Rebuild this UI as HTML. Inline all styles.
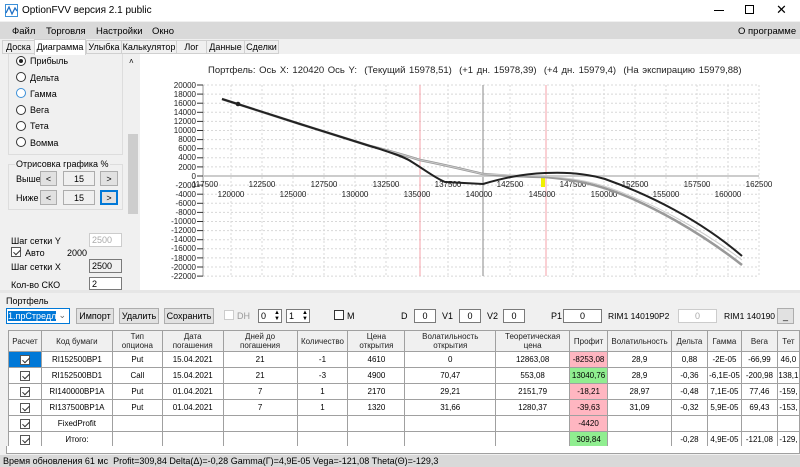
<!DOCTYPE html>
<html><head><meta charset="utf-8">
<style>
*{margin:0;padding:0;box-sizing:border-box}
body{width:800px;height:467px;overflow:hidden;background:#f0f0f0;font-family:"Liberation Sans","DejaVu Sans",sans-serif;font-size:9px;color:#000;position:relative}
.a{position:absolute;white-space:nowrap}
.tab{position:absolute;top:40px;height:14px;border:1px solid #d0d0d0;text-align:center;line-height:12px;font-size:9px}
.btn{position:absolute;background:#e1e1e1;border:1px solid #adadad;text-align:center;font-size:9px;line-height:14px}
.inp{position:absolute;background:#fff;border:1px solid #7a7a7a;font-size:9px;line-height:13px;text-align:center}
.rad{position:absolute;width:10px;height:10px;border:1px solid #333;border-radius:50%;background:#fff}
table{border-collapse:collapse;position:absolute;left:8px;top:330px;background:#fff;font-size:8px;table-layout:fixed}
td{border:1px solid #a0a0a0;text-align:center;height:16px;padding:0;overflow:hidden;white-space:nowrap}
tr.h td{background:#f0f0f0;height:21px;line-height:9px;color:#222}
.cb{display:inline-block;width:10px;height:10px;border:1px solid #555;background:#fff;position:relative;vertical-align:middle}
.cb:after{content:"";position:absolute;left:3px;top:0px;width:3px;height:6px;border:solid #333;border-width:0 1px 1px 0;transform:rotate(45deg)}
.red{background:#ffb6c1}.grn{background:#90ee90}
</style></head><body>
<div class="a" style="left:0;top:0;width:800px;height:21px;background:#fff"></div>
<svg class="a" style="left:5px;top:4px" width="13" height="13"><rect x="0.5" y="0.5" width="12" height="12" fill="#fff" stroke="#3a8fd8"/><polyline points="1,9 4,3 7,10 10,4 12,7" fill="none" stroke="#1f6fc4" stroke-width="1.3"/></svg>
<div class="a" style="left:22px;top:5px;font-size:10px">OptionFVV версия 2.1 public</div>
<div class="a" style="left:714px;top:10px;width:10px;height:1px;background:#000"></div>
<div class="a" style="left:745px;top:5px;width:9px;height:9px;border:1px solid #000"></div>
<div class="a" style="left:776px;top:2px;font-size:13px">✕</div>
<div class="a" style="left:0;top:22px;width:800px;height:17px;background:#d9d9d9"></div>
<div class="a" style="left:12px;top:26px;font-size:9.5px">Файл</div>
<div class="a" style="left:46px;top:26px;font-size:9.5px">Торговля</div>
<div class="a" style="left:96px;top:26px;font-size:9.5px">Настройки</div>
<div class="a" style="left:152px;top:26px;font-size:9.5px">Окно</div>
<div class="a" style="left:738px;top:26px;font-size:9.5px">О программе</div>
<div class="tab" style="left:2px;width:33px">Доска</div>
<div class="tab" style="left:34px;top:39px;height:16px;width:52px;background:#fff;border-bottom:none;line-height:14px">Диаграмма</div>
<div class="tab" style="left:86px;width:36px">Улыбка</div>
<div class="tab" style="left:121px;width:56px">Калькулятор</div>
<div class="tab" style="left:176px;width:31px">Лог</div>
<div class="tab" style="left:206px;width:39px">Данные</div>
<div class="tab" style="left:244px;width:35px">Сделки</div>
<div class="a" style="left:8px;top:54px;width:115px;height:101px;border:1px solid #ddd;border-top:none"></div>
<div class="rad" style="left:16px;top:56px"><div style="position:absolute;left:2px;top:2px;width:4px;height:4px;border-radius:50%;background:#222"></div></div>
<div class="a" style="left:30px;top:56px">Прибыль</div>
<div class="rad" style="left:16px;top:72px"></div><div class="a" style="left:30px;top:73px">Дельта</div>
<div class="rad" style="left:16px;top:88px;border-color:#3a8fd8"></div><div class="a" style="left:30px;top:89px">Гамма</div>
<div class="rad" style="left:16px;top:105px"></div><div class="a" style="left:30px;top:105px">Вега</div>
<div class="rad" style="left:16px;top:121px"></div><div class="a" style="left:30px;top:121px">Тета</div>
<div class="rad" style="left:16px;top:137px"></div><div class="a" style="left:30px;top:138px">Вомма</div>
<div class="a" style="left:8px;top:164px;width:115px;height:46px;border:1px solid #ddd"></div>
<div class="a" style="left:15px;top:159px;background:#f0f0f0;padding:0 1px">Отрисовка графика %</div>
<div class="a" style="left:16px;top:174px">Выше</div>
<div class="btn" style="left:40px;top:171px;width:17px;height:15px">&lt;</div>
<div class="btn" style="left:63px;top:171px;width:32px;height:15px;background:#f0f0f0">15</div>
<div class="btn" style="left:100px;top:171px;width:18px;height:15px">&gt;</div>
<div class="a" style="left:16px;top:193px">Ниже</div>
<div class="btn" style="left:40px;top:190px;width:17px;height:15px">&lt;</div>
<div class="btn" style="left:63px;top:190px;width:32px;height:15px;background:#f0f0f0">15</div>
<div class="btn" style="left:100px;top:190px;width:18px;height:15px;border:1px solid #0078d7;box-shadow:inset 0 0 0 1px #0078d7">&gt;</div>
<div class="a" style="left:11px;top:236px">Шаг сетки Y</div>
<div class="inp" style="left:89px;top:233px;width:33px;height:14px;color:#aaa;border-color:#ccc;text-align:left;padding-left:2px">2500</div>
<div class="cb" style="position:absolute;left:11px;top:247px"></div>
<div class="a" style="left:25px;top:248px">Авто</div>
<div class="a" style="left:67px;top:248px">2000</div>
<div class="a" style="left:11px;top:262px">Шаг сетки X</div>
<div class="inp" style="left:89px;top:259px;width:33px;height:14px;background:#f0f0f0;text-align:left;padding-left:2px">2500</div>
<div class="a" style="left:11px;top:280px">Кол-во СКО</div>
<div class="inp" style="left:89px;top:277px;width:33px;height:13px;text-align:left;padding-left:2px">2</div>
<div class="a" style="left:128px;top:56px;width:10px;height:234px;background:#f0f0f0"></div>
<div class="a" style="left:128px;top:134px;width:10px;height:80px;background:#cdcdcd"></div>
<div class="a" style="left:129px;top:57px;font-size:8px">˄</div>
<div class="a" style="left:140px;top:54px;width:660px;height:236px;background:#fff"></div>
<div class="a" style="left:208px;top:65px;font-size:9.5px;color:#222;word-spacing:1px">Портфель: Ось X: 120420 Ось Y: &nbsp;(Текущий 15978,51) &nbsp;(+1 дн. 15978,39) &nbsp;(+4 дн. 15979,4) &nbsp;(На экспирацию 15979,88)</div>
<svg class="a" style="left:0;top:0" width="800" height="300" font-family="Liberation Sans, sans-serif" font-size="8">
<g stroke="#d8d8d8" stroke-dasharray="2,2" stroke-width="1">
<line x1="203" y1="85" x2="759" y2="85"/><line x1="203" y1="94.1" x2="759" y2="94.1"/><line x1="203" y1="103.2" x2="759" y2="103.2"/><line x1="203" y1="112.3" x2="759" y2="112.3"/><line x1="203" y1="121.4" x2="759" y2="121.4"/><line x1="203" y1="130.5" x2="759" y2="130.5"/><line x1="203" y1="139.6" x2="759" y2="139.6"/><line x1="203" y1="148.7" x2="759" y2="148.7"/><line x1="203" y1="157.8" x2="759" y2="157.8"/><line x1="203" y1="166.9" x2="759" y2="166.9"/><line x1="203" y1="185.1" x2="759" y2="185.1"/><line x1="203" y1="194.2" x2="759" y2="194.2"/><line x1="203" y1="203.3" x2="759" y2="203.3"/><line x1="203" y1="212.4" x2="759" y2="212.4"/><line x1="203" y1="221.5" x2="759" y2="221.5"/><line x1="203" y1="230.6" x2="759" y2="230.6"/><line x1="203" y1="239.7" x2="759" y2="239.7"/><line x1="203" y1="248.8" x2="759" y2="248.8"/><line x1="203" y1="257.9" x2="759" y2="257.9"/><line x1="203" y1="267" x2="759" y2="267"/><line x1="203" y1="276.1" x2="759" y2="276.1"/>
<line x1="231" y1="85" x2="231" y2="276"/><line x1="262" y1="85" x2="262" y2="276"/><line x1="293" y1="85" x2="293" y2="276"/><line x1="324" y1="85" x2="324" y2="276"/><line x1="355" y1="85" x2="355" y2="276"/><line x1="386" y1="85" x2="386" y2="276"/><line x1="448" y1="85" x2="448" y2="276"/><line x1="510" y1="85" x2="510" y2="276"/><line x1="573" y1="85" x2="573" y2="276"/><line x1="604" y1="85" x2="604" y2="276"/><line x1="635" y1="85" x2="635" y2="276"/><line x1="666" y1="85" x2="666" y2="276"/><line x1="697" y1="85" x2="697" y2="276"/><line x1="728" y1="85" x2="728" y2="276"/><line x1="759" y1="85" x2="759" y2="276"/>
</g>
<line x1="203" y1="85" x2="203" y2="276" stroke="#999"/>
<line x1="420" y1="85" x2="420" y2="276" stroke="#f4a0a8"/>
<line x1="546" y1="85" x2="546" y2="276" stroke="#f4a0a8"/>
<line x1="483" y1="85" x2="483" y2="276" stroke="#888"/>
<line x1="203" y1="176" x2="759" y2="176" stroke="#ccc" stroke-width="2"/>
<g stroke="#333">
<line x1="197" y1="85" x2="203" y2="85"/><line x1="197" y1="94.1" x2="203" y2="94.1"/><line x1="197" y1="103.2" x2="203" y2="103.2"/><line x1="197" y1="112.3" x2="203" y2="112.3"/><line x1="197" y1="121.4" x2="203" y2="121.4"/><line x1="197" y1="130.5" x2="203" y2="130.5"/><line x1="197" y1="139.6" x2="203" y2="139.6"/><line x1="197" y1="148.7" x2="203" y2="148.7"/><line x1="197" y1="157.8" x2="203" y2="157.8"/><line x1="197" y1="166.9" x2="203" y2="166.9"/><line x1="197" y1="176" x2="203" y2="176"/><line x1="197" y1="185.1" x2="203" y2="185.1"/><line x1="197" y1="194.2" x2="203" y2="194.2"/><line x1="197" y1="203.3" x2="203" y2="203.3"/><line x1="197" y1="212.4" x2="203" y2="212.4"/><line x1="197" y1="221.5" x2="203" y2="221.5"/><line x1="197" y1="230.6" x2="203" y2="230.6"/><line x1="197" y1="239.7" x2="203" y2="239.7"/><line x1="197" y1="248.8" x2="203" y2="248.8"/><line x1="197" y1="257.9" x2="203" y2="257.9"/><line x1="197" y1="267" x2="203" y2="267"/><line x1="197" y1="276.1" x2="203" y2="276.1"/>
</g>
<g text-anchor="end" fill="#222">
<text x="196" y="88">20000</text><text x="196" y="97">18000</text><text x="196" y="106">16000</text><text x="196" y="115">14000</text><text x="196" y="124">12000</text><text x="196" y="133">10000</text><text x="196" y="142">8000</text><text x="196" y="151">6000</text><text x="196" y="160">4000</text><text x="196" y="170">2000</text><text x="196" y="179">0</text><text x="196" y="188">-2000</text><text x="196" y="197">-4000</text><text x="196" y="206">-6000</text><text x="196" y="215">-8000</text><text x="196" y="224">-10000</text><text x="196" y="233">-12000</text><text x="196" y="242">-14000</text><text x="196" y="251">-16000</text><text x="196" y="261">-18000</text><text x="196" y="270">-20000</text><text x="196" y="279">-22000</text>
</g>
<g text-anchor="middle" fill="#222">
<text x="205" y="187">117500</text><text x="262" y="187">122500</text><text x="324" y="187">127500</text><text x="386" y="187">132500</text><text x="448" y="187">137500</text><text x="510" y="187">142500</text><text x="573" y="187">147500</text><text x="635" y="187">152500</text><text x="697" y="187">157500</text><text x="759" y="187">162500</text>
<text x="231" y="197">120000</text><text x="293" y="197">125000</text><text x="355" y="197">130000</text><text x="417" y="197">135000</text><text x="479" y="197">140000</text><text x="542" y="197">145000</text><text x="604" y="197">150000</text><text x="666" y="197">155000</text><text x="728" y="197">160000</text>
</g>
<rect x="541" y="176" width="4" height="11" fill="#f0f000"/>
<path d="M222,99 L300,124 L370,146 C395,152 410,157 420,160 C450,166 470,171 483,174 C510,176 530,177 545,177 C570,179 590,183 610,190 C650,204 700,232 742,265" fill="none" stroke="#999" stroke-width="2.5"/>
<path d="M222,99 L300,124 L370,146 C395,152 410,157 420,160 C450,166 470,171 483,174 C510,175 530,176 545,176 C570,178 590,181 610,188 C650,202 700,228 742,260" fill="none" stroke="#ccc" stroke-width="1"/>
<path d="M222,99 L300,124 L370,146 C390,152 405,157 412,162 C425,170 435,178 445,182 L483,184 C500,179 520,174 545,173 C565,172 585,173 605,179 C650,195 700,220 742,256" fill="none" stroke="#222" stroke-width="2"/>
<circle cx="238" cy="104" r="2.3" fill="#222"/>
</svg>
<div class="a" style="left:0;top:290px;width:800px;height:3px;background:#e6e6e6"></div>
<div class="a" style="left:6px;top:296px">Портфель</div>
<div class="inp" style="left:6px;top:308px;width:64px;height:16px;border-color:#0078d7;text-align:left;padding:1px"><span style="background:#0078d7;color:#fff">1.прСтредл</span><span style="position:absolute;right:3px;top:0;color:#666">⌄</span></div>
<div class="btn" style="left:76px;top:308px;width:38px;height:16px">Импорт</div>
<div class="btn" style="left:119px;top:308px;width:40px;height:16px">Удалить</div>
<div class="btn" style="left:164px;top:308px;width:50px;height:16px">Сохранить</div>
<div class="a" style="left:224px;top:310px;width:10px;height:10px;border:1px solid #ccc;background:#fff"></div>
<div class="a" style="left:237px;top:311px;color:#999">DH</div>
<div class="inp" style="left:258px;top:309px;width:24px;height:14px;text-align:left;padding-left:2px">0<span style="position:absolute;right:1px;top:0;font-size:6px;line-height:6px">▲<br>▼</span></div>
<div class="inp" style="left:286px;top:309px;width:24px;height:14px;text-align:left;padding-left:2px">1<span style="position:absolute;right:1px;top:0;font-size:6px;line-height:6px">▲<br>▼</span></div>
<div class="a" style="left:334px;top:310px;width:10px;height:10px;border:1px solid #333;background:#fff"></div>
<div class="a" style="left:347px;top:311px">M</div>
<div class="a" style="left:401px;top:311px">D</div>
<div class="inp" style="left:414px;top:309px;width:22px;height:14px">0</div>
<div class="a" style="left:442px;top:311px">V1</div>
<div class="inp" style="left:459px;top:309px;width:22px;height:14px">0</div>
<div class="a" style="left:487px;top:311px">V2</div>
<div class="inp" style="left:503px;top:309px;width:22px;height:14px">0</div>
<div class="a" style="left:551px;top:311px">P1</div>
<div class="inp" style="left:563px;top:309px;width:39px;height:14px">0</div>
<div class="a" style="left:608px;top:311px;font-size:8.5px">RIM1 140190</div>
<div class="a" style="left:659px;top:311px;font-size:8.5px">P2</div>
<div class="inp" style="left:678px;top:309px;width:39px;height:14px;border-color:#ccc;color:#aaa">0</div>
<div class="a" style="left:724px;top:311px;font-size:8.5px">RIM1 140190</div>
<div class="btn" style="left:777px;top:308px;width:17px;height:16px">_</div>
<table>
<colgroup><col style="width:33px"><col style="width:71px"><col style="width:50px"><col style="width:61px"><col style="width:74px"><col style="width:51px"><col style="width:57px"><col style="width:91px"><col style="width:74px"><col style="width:38px"><col style="width:64px"><col style="width:36px"><col style="width:34px"><col style="width:36px"><col style="width:22px"></colgroup>
<tr class="h"><td>Расчет</td><td>Код бумаги</td><td>Тип<br>опциона</td><td>Дата<br>погашения</td><td>Дней до<br>погашения</td><td>Количество</td><td>Цена<br>открытия</td><td>Волатильность<br>открытия</td><td>Теоретическая<br>цена</td><td>Профит</td><td>Волатильность</td><td>Дельта</td><td>Гамма</td><td>Вега</td><td>Тет</td></tr>
<tr><td style="background:#0078d7"><span class="cb"></span></td><td>RI152500BP1</td><td>Put</td><td>15.04.2021</td><td>21</td><td>-1</td><td>4610</td><td>0</td><td>12863,08</td><td class="red">-8253,08</td><td>28,9</td><td>0,88</td><td>-2E-05</td><td>-66,99</td><td>46,0</td></tr>
<tr><td><span class="cb"></span></td><td>RI152500BD1</td><td>Call</td><td>15.04.2021</td><td>21</td><td>-3</td><td>4900</td><td>70,47</td><td>553,08</td><td class="grn">13040,76</td><td>28,9</td><td>-0,36</td><td>-6,1E-05</td><td>-200,98</td><td>138,1</td></tr>
<tr><td><span class="cb"></span></td><td>RI140000BP1A</td><td>Put</td><td>01.04.2021</td><td>7</td><td>1</td><td>2170</td><td>29,21</td><td>2151,79</td><td class="red">-18,21</td><td>28,97</td><td>-0,48</td><td>7,1E-05</td><td>77,46</td><td>-159,</td></tr>
<tr><td><span class="cb"></span></td><td>RI137500BP1A</td><td>Put</td><td>01.04.2021</td><td>7</td><td>1</td><td>1320</td><td>31,66</td><td>1280,37</td><td class="red">-39,63</td><td>31,09</td><td>-0,32</td><td>5,9E-05</td><td>69,43</td><td>-153,</td></tr>
<tr><td><span class="cb"></span></td><td>FixedProfit</td><td></td><td></td><td></td><td></td><td></td><td></td><td></td><td class="red">-4420</td><td></td><td></td><td></td><td></td><td></td></tr>
<tr><td><span class="cb"></span></td><td>Итого:</td><td></td><td></td><td></td><td></td><td></td><td></td><td></td><td class="grn">309,84</td><td></td><td>-0,28</td><td>4,9E-05</td><td>-121,08</td><td>-129,</td></tr>
</table>
<div class="a" style="left:6px;top:446px;width:794px;height:8px;background:#fff;border:1px solid #a0a0a0;border-top:none"></div>
<div class="a" style="left:0;top:455px;width:800px;height:12px;background:#d9d9d9"></div>
<div class="a" style="left:3px;top:456px;font-size:9px">Время обновления 61 мс &nbsp;Profit=309,84 Delta(Δ)=-0,28 Gamma(Γ)=4,9E-05 Vega=-121,08 Theta(Θ)=-129,3</div>
</body></html>
